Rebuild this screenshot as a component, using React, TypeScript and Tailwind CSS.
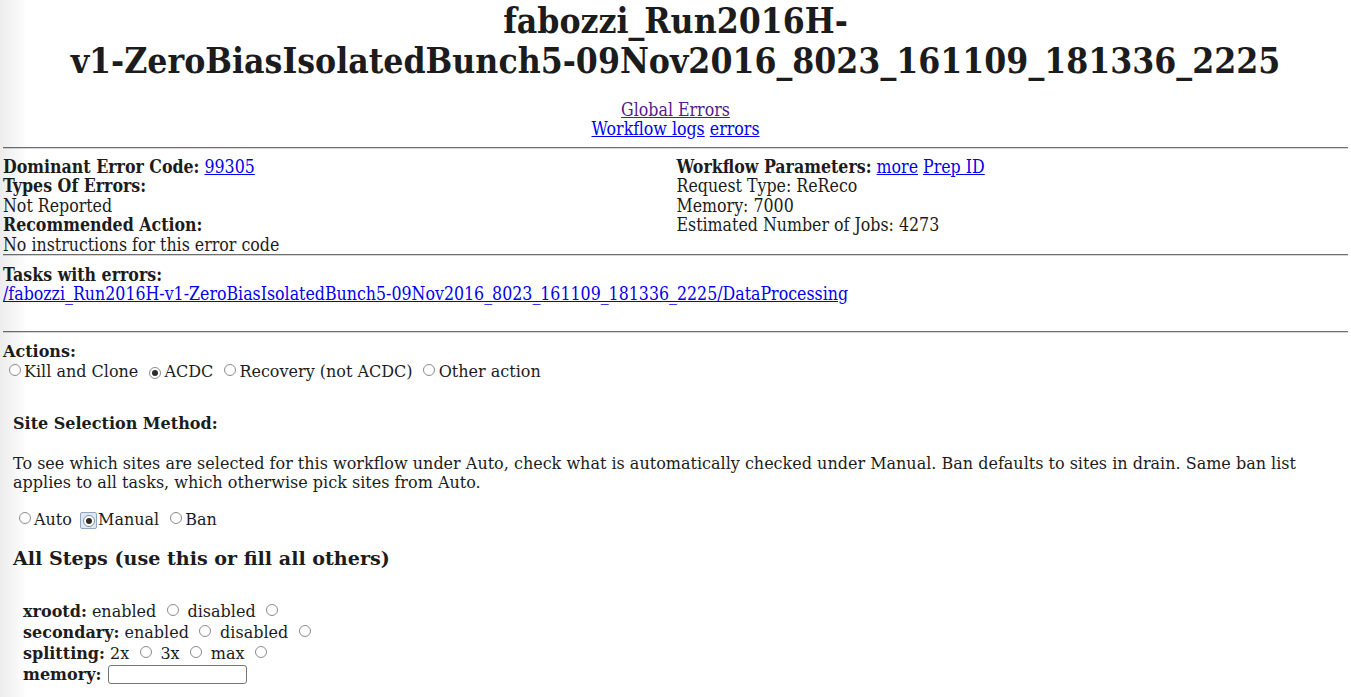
import React from "react";

const Radio = ({ checked = false, focused = false }: { checked?: boolean; focused?: boolean }) => {
  const circle = (
    <span className="relative inline-flex h-[12px] w-[12px] shrink-0 items-center justify-center rounded-full border border-[#8c8c8c] bg-white">
      {checked && <span className="h-[6px] w-[6px] rounded-full bg-[#2b2b2b]" />}
    </span>
  );
  return (
    <span className="mr-[3px] ml-[5px] inline-flex h-[13px] w-[13px] items-center justify-center align-[1px]">
      {focused ? (
        <span className="inline-flex h-[17px] w-[17px] shrink-0 items-center justify-center rounded-[2px] border border-[#8ea7c6] bg-[#dfe8f2]">
          {circle}
        </span>
      ) : (
        circle
      )}
    </span>
  );
};

const Hr = ({ className = "" }: { className?: string }) => (
  <div className={"h-0 border-t border-b border-t-[#6f6f6f] border-b-[#d6d6d6] " + className} />
);

const A = ({ children, visited = false }: { children: React.ReactNode; visited?: boolean }) => (
  <a href="#" className={visited ? "text-[#551a8b] underline" : "text-[#0000ee] underline"}>
    {children}
  </a>
);

// one fixed-height text line of the condensed upper part
const L = ({ children, className = "" }: { children?: React.ReactNode; className?: string }) => (
  <div className={"h-[19.5px] overflow-visible whitespace-nowrap " + className}>{children}</div>
);

export default function App() {
  return (
    <div className="relative min-h-[697px] bg-white px-[3px] text-[16px] text-[#1c1c1c] font-['DejaVu_Serif',serif]">
      {/* soft shadow on the left edge */}
      <div className="pointer-events-none absolute top-0 left-0 h-full w-[28px] bg-gradient-to-r from-[rgba(0,0,0,0.075)] to-transparent" />

      <div className="text-[17.6px] leading-[19.5px] font-['DejaVu_Serif_Condensed','DejaVu_Serif',serif]">
        <h1 className="pt-[1px] text-center text-[35.2px] leading-[40px] font-bold">
          fabozzi_Run2016H-
          <br />
          v1-ZeroBiasIsolatedBunch5-09Nov2016_8023_161109_181336_2225
        </h1>

        <div className="mt-[20px] text-center">
          <L>
            <A visited>Global Errors</A>
          </L>
          <L className="-mt-[0.5px]">
            <A>Workflow logs</A> <A>errors</A>
          </L>
        </div>

        <Hr className="mt-[7px]" />

        <div className="mt-[8px] grid grid-cols-2">
          <div>
            <L>
              <b>Dominant Error Code:</b> <A>99305</A>
            </L>
            <L>
              <b>Types Of Errors:</b>
            </L>
            <L className="pt-[1px]">Not Reported</L>
            <L>
              <b>Recommended Action:</b>
            </L>
            <L className="pt-[1px]">No instructions for this error code</L>
          </div>
          <div className="pl-[1px]">
            <L>
              <b>Workflow Parameters:</b> <A>more</A> <A>Prep ID</A>
            </L>
            <L className="pt-[1px]">Request Type: ReReco</L>
            <L className="pt-[1px]">Memory: 7000</L>
            <L className="pt-[1px]">Estimated Number of Jobs: 4273</L>
          </div>
        </div>

        <Hr />

        <div className="mt-[8px]">
          <L className="pt-[1px]">
            <b>Tasks with errors:</b>
          </L>
          <L className="pt-[1px]">
            <A>/fabozzi_Run2016H-v1-ZeroBiasIsolatedBunch5-09Nov2016_8023_161109_181336_2225/DataProcessing</A>
          </L>
          <L />
        </div>

        <Hr className="mt-[8px]" />
      </div>

      <div className="leading-[20px]">
        <div className="mt-[9px] font-bold">Actions:</div>
        <div>
          <Radio />
          Kill and Clone <Radio checked />
          ACDC <Radio />
          Recovery (not ACDC) <Radio />
          Other action
        </div>

        <div className="px-[10px]">
          <div className="mt-[32px] font-bold">Site Selection Method:</div>
          <p className="mt-[20px] leading-[19px]">
            To see which sites are selected for this workflow under Auto, check what is automatically checked under
            Manual. Ban defaults to sites in drain. Same ban list applies to all tasks, which otherwise pick sites from
            Auto.
          </p>
          <div className="mt-[18px]">
            <Radio />
            Auto <Radio checked focused />
            Manual <Radio />
            Ban
          </div>

          <h3 className="mt-[18px] text-[19.1px] leading-[22px] font-bold">All Steps (use this or fill all others)</h3>

          <div className="mt-[31px] px-[10px] leading-[21px]">
            <div>
              <b>xrootd:</b> enabled <Radio /> disabled <Radio />
            </div>
            <div>
              <b>secondary:</b> enabled <Radio /> disabled <Radio />
            </div>
            <div>
              <b>splitting:</b> 2x <Radio /> 3x <Radio /> max <Radio />
            </div>
            <div className="flex items-center">
              <b>memory:</b>
              <input
                type="text"
                className="ml-[7px] h-[19px] w-[139px] rounded-[3px] border border-[#767676] bg-white"
              />
            </div>
          </div>
        </div>
      </div>
    </div>
  );
}
